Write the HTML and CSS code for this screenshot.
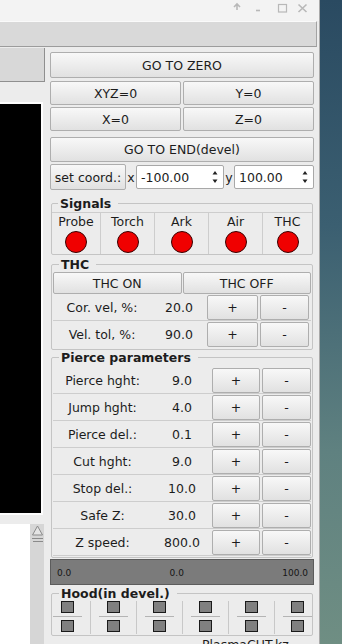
FILE: index.html
```html
<!DOCTYPE html>
<html lang="en">
<head>
    <meta charset="UTF-8">
    <meta name="viewport" content="width=device-width, initial-scale=1.0">
    <title>PlasmaCUT</title>
    <link rel="stylesheet" href="styles.css">
</head>
<body>
    <div class="screen">
        <div class="window">
            <div class="titlebar">
                <svg class="wm-icons" width="76" height="21" viewBox="0 0 76 21">
                    <path d="M5 4.5 L5 10 M2 7 L5 4 L8 7" fill="none" stroke="#b8b8b8" stroke-width="1.6"/>
                    <path d="M24 10.5 H28" stroke="#b8b8b8" stroke-width="1.6"/>
                    <rect x="46.5" y="4.5" width="8" height="7.5" fill="none" stroke="#b8b8b8" stroke-width="1.2"/>
                    <path d="M66.5 4.5 L74.5 12 M74.5 4.5 L66.5 12" stroke="#b8b8b8" stroke-width="1.6"/>
                </svg>
            </div>
            <div class="toolbar"></div>
            <div class="main">
                <div class="left">
                    <div class="tab"></div>
                    <div class="view"></div>
                    <div class="lower">
                        <div class="list"></div>
                        <div class="scrollbar">
                            <svg width="14" height="20" viewBox="0 0 14 20">
                                <path d="M7.5 2 L12.5 11 H2.5 Z" fill="#e4e4e4" stroke="#8a8a8a" stroke-width="1"/>
                                <path d="M2 14.5 H13 M3 17.5 H13" stroke="#8a8a8a" stroke-width="1"/>
                            </svg>
                        </div>
                    </div>
                </div>

                <div class="panel">
                    <button class="btn wide">GO TO ZERO</button>
                    <div class="pair">
                        <button class="btn">XYZ=0</button>
                        <button class="btn">Y=0</button>
                    </div>
                    <div class="pair second">
                        <button class="btn">X=0</button>
                        <button class="btn">Z=0</button>
                    </div>
                    <button class="btn wide end">GO TO END(devel)</button>

                    <div class="coords">
                        <button class="btn set">set coord.:</button>
                        <span class="axis">x</span>
                        <div class="spin first">
                            <span>-100.00</span>
                            <svg class="arrows" width="6" height="20" viewBox="0 0 6 20"><path d="M3 4 L5.5 7.5 H0.5 Z M3 16 L5.5 12.5 H0.5 Z" fill="#222"/></svg>
                        </div>
                        <span class="axis">y</span>
                        <div class="spin">
                            <span>100.00</span>
                            <svg class="arrows" width="6" height="20" viewBox="0 0 6 20"><path d="M3 4 L5.5 7.5 H0.5 Z M3 16 L5.5 12.5 H0.5 Z" fill="#222"/></svg>
                        </div>
                    </div>

                    <fieldset class="group signals">
                        <legend>Signals</legend>
                        <div class="leds">
                            <div class="led-cell"><span>Probe</span><i class="led"></i></div>
                            <div class="led-cell"><span>Torch</span><i class="led"></i></div>
                            <div class="led-cell"><span>Ark</span><i class="led"></i></div>
                            <div class="led-cell"><span>Air</span><i class="led"></i></div>
                            <div class="led-cell"><span>THC</span><i class="led"></i></div>
                        </div>
                    </fieldset>

                    <fieldset class="group thc">
                        <legend>THC</legend>
                        <div class="onoff">
                            <button class="btn">THC ON</button>
                            <button class="btn">THC OFF</button>
                        </div>
                        <div class="param">
                            <span class="name">Cor. vel, %:</span>
                            <span class="value">20.0</span>
                            <button class="btn">+</button>
                            <button class="btn">-</button>
                        </div>
                        <div class="param last">
                            <span class="name">Vel. tol, %:</span>
                            <span class="value">90.0</span>
                            <button class="btn">+</button>
                            <button class="btn">-</button>
                        </div>
                    </fieldset>

                    <fieldset class="group pierce">
                        <legend>Pierce parameters</legend>
                        <div class="param">
                            <span class="name">Pierce hght:</span>
                            <span class="value">9.0</span>
                            <button class="btn">+</button>
                            <button class="btn">-</button>
                        </div>
                        <div class="param">
                            <span class="name">Jump hght:</span>
                            <span class="value">4.0</span>
                            <button class="btn">+</button>
                            <button class="btn">-</button>
                        </div>
                        <div class="param">
                            <span class="name">Pierce del.:</span>
                            <span class="value">0.1</span>
                            <button class="btn">+</button>
                            <button class="btn">-</button>
                        </div>
                        <div class="param">
                            <span class="name">Cut hght:</span>
                            <span class="value">9.0</span>
                            <button class="btn">+</button>
                            <button class="btn">-</button>
                        </div>
                        <div class="param">
                            <span class="name">Stop del.:</span>
                            <span class="value">10.0</span>
                            <button class="btn">+</button>
                            <button class="btn">-</button>
                        </div>
                        <div class="param">
                            <span class="name">Safe Z:</span>
                            <span class="value">30.0</span>
                            <button class="btn">+</button>
                            <button class="btn">-</button>
                        </div>
                        <div class="param">
                            <span class="name">Z speed:</span>
                            <span class="value">800.0</span>
                            <button class="btn">+</button>
                            <button class="btn">-</button>
                        </div>
                    </fieldset>

                    <div class="scale">
                        <span>0.0</span>
                        <span>0.0</span>
                        <span>100.0</span>
                    </div>

                    <fieldset class="group hood">
                        <legend>Hood(in devel.)</legend>
                        <div class="hood-grid">
                            <div class="hood-col"><i class="sq"></i><b class="sep"></b><i class="sq"></i></div>
                            <div class="hood-col"><i class="sq"></i><b class="sep"></b><i class="sq"></i></div>
                            <div class="hood-col"><i class="sq"></i><b class="sep"></b><i class="sq"></i></div>
                            <div class="hood-col"><i class="sq"></i><b class="sep"></b><i class="sq"></i></div>
                            <div class="hood-col"><i class="sq"></i><b class="sep"></b><i class="sq"></i></div>
                            <div class="hood-col"><i class="sq"></i><b class="sep"></b><i class="sq"></i></div>
                        </div>
                    </fieldset>

                    <div class="brand">PlasmaCUT.kz</div>
                </div>
            </div>
        </div>
        <div class="desktop"></div>
    </div>
</body>
</html>
```

FILE: styles.css
```css
body {
    margin: 0;
    font-family: "DejaVu Sans", sans-serif;
    font-size: 12.5px;
    color: #1c1c1c;
    overflow: hidden;
}

.screen {
    display: flex;
    width: 342px;
    height: 644px;
    overflow: hidden;
}

.window {
    width: 319px;
    flex-shrink: 0;
    display: flex;
    flex-direction: column;
    background-color: #ececec;
    border-right: 1px solid #a9a9a9;
}

.desktop {
    flex: 1;
    background: linear-gradient(#2a4a61, #3b5f71 35%, #5f8180 70%, #6f8e83);
}

/* window frame */

.titlebar {
    height: 21px;
    flex-shrink: 0;
    background-color: #f3f3f3;
    display: flex;
    justify-content: flex-end;
    padding-right: 11px;
    box-sizing: border-box;
}

.toolbar {
    height: 26px;
    flex-shrink: 0;
    box-sizing: border-box;
    margin-right: 2px;
    background-color: #d9d9d9;
    border-top: 1px solid #fafafa;
    border-bottom: 1px solid #9c9c9c;
    border-right: 1px solid #a3a3a3;
}

.main {
    flex: 1;
    display: flex;
    min-height: 0;
}

/* left side */

.left {
    width: 45px;
    display: flex;
    flex-direction: column;
}

.left > * {
    flex-shrink: 0;
}

.tab {
    margin-top: 1px;
    height: 34px;
    box-sizing: border-box;
    background-color: #d8d8d8;
    border-right: 1px solid #8f8f8f;
    border-bottom: 1px solid #8f8f8f;
}

.view {
    margin-top: 20px;
    width: 43px;
    height: 413px;
    box-sizing: border-box;
    background-color: #000;
    border: 2px solid #fdfdfd;
    border-left: none;
}

.lower {
    margin-top: 9px;
    flex: 1;
    display: flex;
}

.list {
    width: 30px;
    background-color: #fff;
}

.scrollbar {
    width: 14px;
    background-color: #d6d6d6;
}

.scrollbar svg {
    display: block;
}

/* right panel */

.panel {
    width: 264px;
    margin-left: 5px;
    padding-top: 5px;
    display: flex;
    flex-direction: column;
}

.panel > * {
    flex-shrink: 0;
}

.btn {
    font: inherit;
    color: inherit;
    padding: 0;
    margin: 0;
    box-sizing: border-box;
    background: linear-gradient(#f8f8f8, #e1e1e1);
    border: 1px solid #aeaeae;
    border-radius: 2px;
}

.wide {
    height: 26px;
}

.pair {
    display: grid;
    grid-template-columns: 1fr 1fr;
    gap: 2px;
    margin-top: 3px;
}

.pair.second {
    margin-top: 2px;
}

.pair .btn {
    height: 24px;
}

.end {
    margin-top: 6px;
    height: 25px;
}

.coords {
    margin-top: 2px;
    height: 26px;
    display: flex;
    align-items: center;
}

.coords .set {
    width: 76px;
    height: 26px;
}

.axis {
    width: 10px;
    text-align: center;
}

.spin {
    height: 24px;
    box-sizing: border-box;
    background-color: #fff;
    border: 1px solid #a8a8a8;
    border-radius: 2px;
    display: flex;
    align-items: center;
    justify-content: space-between;
    padding: 0 5px 0 4px;
}

.spin.first {
    width: 88px;
}

.spin:last-child {
    flex: 1;
}

/* group boxes */

.group {
    margin: 0 1px;
    padding: 0 1px 1px;
    border: 1px solid #c4c4c4;
    border-radius: 2px;
    min-width: 0;
}

.group legend {
    margin-left: 6px;
    padding: 0 7px 0 2px;
    font-weight: bold;
    line-height: 15px;
}

.signals {
    margin-top: 6px;
    padding: 1px 0 0;
}

.leds {
    display: grid;
    grid-template-columns: 48px 54px 54px 54px 1fr;
    border-top: 1px solid #cdcdcd;
}

.led-cell {
    height: 41px;
    display: flex;
    flex-direction: column;
    align-items: center;
    border-left: 1px solid #cdcdcd;
}

.led-cell:first-child {
    border-left: none;
}

.led-cell span {
    line-height: 15px;
    margin-top: 1px;
}

.led {
    width: 22px;
    height: 22px;
    margin-top: 2px;
    box-sizing: border-box;
    border-radius: 50%;
    background-color: #f00000;
    border: 1px solid #3a0000;
}

.thc {
    margin-top: 2px;
}

.onoff {
    display: grid;
    grid-template-columns: 1fr 1fr;
    gap: 1px;
}

.onoff .btn {
    height: 22px;
}

.param {
    height: 27px;
    box-sizing: border-box;
    display: grid;
    grid-template-columns: 98px 56px 51px 51px;
    align-items: start;
    border-bottom: 1px solid #cdcdcd;
}

.param .btn {
    height: 25px;
    margin-top: 1px;
}

.param .btn:last-child {
    margin-left: 2px;
    width: 49px;
}

.param .name,
.param .value {
    text-align: center;
    line-height: 27px;
}

.thc .param.last {
    border-bottom: none;
}

.pierce {
    padding-top: 2px;
}

.pierce .param {
    grid-template-columns: 99px 60px 48px 51px;
}

.scale {
    margin-top: 1px;
    height: 26px;
    box-sizing: border-box;
    background-color: #7b7b7b;
    border: 1px solid #5c5c5c;
    display: flex;
    justify-content: space-between;
    align-items: center;
    padding: 2px 5px 0 6px;
    font-size: 9px;
    color: #161616;
}

.hood {
    margin-top: 1px;
}

.hood-grid {
    display: grid;
    grid-template-columns: 37px 46px 46px 46px 46px 1fr;
}

.hood-col {
    height: 33px;
    display: flex;
    flex-direction: column;
    align-items: center;
    border-left: 1px solid #c8c8c8;
}

.hood-col:first-child {
    border-left: none;
    padding-right: 9px;
}

.hood-col:last-child {
    padding-left: 8px;
}

.sq {
    width: 13px;
    height: 12px;
    box-sizing: border-box;
    background-color: #808080;
    border: 1px solid #1a1a1a;
}

.sep {
    width: 29px;
    height: 1px;
    margin: 3px 0 3px;
    background-color: #b4b4b4;
}

.brand {
    margin-top: 1px;
    padding-left: 152px;
    line-height: 15px;
    white-space: nowrap;
}
```
